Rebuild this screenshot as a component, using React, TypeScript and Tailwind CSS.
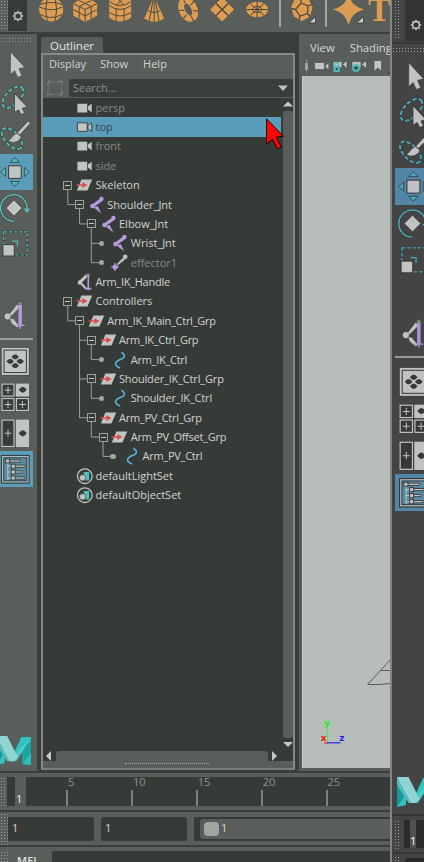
import React from "react";

const UI = "font-['Open_Sans','Noto_Sans',sans-serif]";
const DOTS = "shrink-0 bg-[radial-gradient(#9a9f9b_0.8px,transparent_0.9px)] bg-[length:3px_3px]";

type Tone = { light: string; dark: string; teal: string; purple: string };
const MUTED: Tone = { light: "#c0c5c1", dark: "#393d3a", teal: "#55b8ba", purple: "#b79be0" };
const PLAIN: Tone = { light: "#c2c2c2", dark: "#373737", teal: "#48a9b9", purple: "#a994d8" };

type ToolName = "select" | "lasso" | "paint" | "move" | "rotate" | "scale" | "ik" | "single" | "four" | "two" | "tree";

function Pads({ x, y, fill }: { x: number; y: number; fill: string }) {
  return (
    <g fill={fill} transform={`translate(${x} ${y})`}>
      {[[0, -4.4], [0, 4.4], [-5, 0], [5, 0]].map(([a, b]) => (
        <path key={`${a}${b}`} d={`M${a - 3.8} ${b}l2.6-2.4h2.4l2.6 2.4l-2.6 2.4h-2.4z`} />
      ))}
    </g>
  );
}

function ToolArt({ name, t }: { name: ToolName; t: Tone }) {
  switch (name) {
    case "select":
      return <path d="M13.5 5.7L27.9 21.5L22 22.6L25 29.8L20.6 31.5L17.7 24.8L13.3 28.8z" fill={t.light} stroke={t.dark} strokeWidth=".6" />;
    case "lasso":
      return (
        <>
          <ellipse cx="16" cy="15.3" rx="13.2" ry="7" transform="rotate(-46 16 15.3)" fill="none" stroke={t.dark} strokeWidth="2.8" opacity=".6" />
          <ellipse cx="16" cy="15.3" rx="13.2" ry="7" transform="rotate(-46 16 15.3)" fill="none" stroke={t.teal} strokeWidth="1.8" strokeDasharray="4.2 2" />
          <path d="M17.5 11.5L30.3 25L25.3 26.2L27.7 31.2L24 32.6L21.6 27.8L17.5 30.5z" fill={t.light} stroke={t.dark} strokeWidth=".8" />
        </>
      );
    case "paint":
      return (
        <>
          <ellipse cx="15" cy="20.6" rx="13" ry="6.7" transform="rotate(46 15 20.6)" fill="none" stroke={t.dark} strokeWidth="2.8" opacity=".6" />
          <ellipse cx="15" cy="20.6" rx="13" ry="6.7" transform="rotate(46 15 20.6)" fill="none" stroke={t.teal} strokeWidth="1.8" strokeDasharray="4.2 2" />
          <path d="M31.6 5L21.6 15.8" stroke={t.dark} strokeWidth="4.4" />
          <path d="M32 4.6L21.6 15.8" stroke={t.light} strokeWidth="3" />
          <path d="M11 22.6C14.5 21.5 15 17 19.8 15.2L24 18.6C23 24 15.5 26.3 11 22.6z" fill={t.light} stroke={t.dark} strokeWidth=".6" />
        </>
      );
    case "move":
      return (
        <>
          <rect x="11.6" y="11.8" width="12.6" height="12.6" fill={t.light} stroke={t.dark} strokeWidth="1" />
          <path d="M17.9 3.6l4.6 4.8h-9.2zM17.9 32.3l4.6-4.8h-9.2zM3.6 18l4.9-4.6v9.2zM32.3 18l-4.9-4.6v9.2z" fill={t.teal} stroke={t.dark} strokeWidth=".8" />
        </>
      );
    case "rotate":
      return (
        <>
          <path d="M30 19A13.2 13.2 0 1 0 16.8 31.2" fill="none" stroke={t.dark} strokeWidth="2.8" opacity=".6" />
          <path d="M30 19A13.2 13.2 0 1 0 16.8 31.2" fill="none" stroke={t.teal} strokeWidth="1.5" />
          <path d="M26.6 18.5h6.6l-3.3 4.8z" fill={t.teal} />
          <path d="M17 10l8 8l-8 8l-8-8z" fill={t.light} stroke={t.dark} strokeWidth=".6" />
        </>
      );
    case "scale":
      return (
        <>
          <rect x="6.8" y="5.8" width="23.4" height="23.2" fill="none" stroke={t.dark} strokeWidth="2" />
          <rect x="6.8" y="5.8" width="23.4" height="23.2" fill="none" stroke={t.teal} strokeWidth="1.2" strokeDasharray="3.5 1.5" />
          <path d="M15.2 15.2h5.3v5.3" fill="none" stroke={t.teal} strokeWidth="1.2" />
          <rect x="5.9" y="18.6" width="11.4" height="11.4" fill={t.light} stroke={t.dark} strokeWidth="1" />
        </>
      );
    case "ik":
      return (
        <>
          <path d="M12 16.6L20.2 5.8L23.6 8.8L14.4 18z" fill={t.light} stroke={t.dark} strokeWidth=".6" />
          <path d="M12.4 20.4L16.4 20.6L22.4 28L20.4 30L14.4 25.4z" fill={t.light} stroke={t.dark} strokeWidth=".6" />
          <circle cx="10.6" cy="18.6" r="3" fill={t.light} />
          <circle cx="23.2" cy="5.8" r="2.4" fill="#858986" stroke={t.dark} strokeWidth=".6" />
          <path d="M21.5 7h3.4v20h-3.4z" fill={t.purple} />
          <path d="M19 27.3h8.6M23.2 26v5" stroke={t.purple} strokeWidth="1.3" />
        </>
      );
    case "single":
      return (
        <>
          <rect x="4.2" y="4.3" width="28" height="28" fill={t.light} stroke={t.dark} strokeWidth=".7" />
          <rect x="7" y="7.1" width="22.4" height="22.4" fill="none" stroke={t.dark} strokeWidth="1" />
          <Pads x={18.2} y={18.3} fill={t.dark} />
        </>
      );
    case "four":
      return (
        <>
          <rect x="4.2" y="4.3" width="28" height="28" fill={t.dark} />
          {[[4.7, 4.8], [4.7, 19.2], [19.1, 19.2]].map(([x, y]) => (
            <g key={`${x}-${y}`} stroke={t.light} fill="none">
              <rect x={x + .3} y={y + .3} width="12" height="12" strokeWidth="1.2" />
              <path d={`M${x + 2.8} ${y + 6.3}h7M${x + 6.3} ${y + 2.8}v7`} strokeWidth="1" />
            </g>
          ))}
          <rect x="18.7" y="4.5" width="13.4" height="13.1" fill={t.light} />
          <path d="M21.5 10.7l3-2.7h2.4l3 2.7l-3 2.7h-2.4z" fill={t.dark} />
        </>
      );
    case "two":
      return (
        <>
          <rect x="4.2" y="4.3" width="28" height="28" fill={t.dark} />
          <rect x="5" y="5.1" width="12" height="26.4" fill="none" stroke={t.light} strokeWidth="1.2" />
          <path d="M7.5 18.2h7M11 14.7v7" stroke={t.light} />
          <rect x="18.7" y="4.5" width="13.4" height="27.6" fill={t.light} />
          <path d="M21.5 18.3l3-2.9h2.4l3 2.9l-3 2.9h-2.4z" fill={t.dark} />
        </>
      );
    case "tree":
      return (
        <>
          <rect x="4.7" y="4.7" width="27.2" height="27.2" fill="#568aa5" stroke={t.dark} strokeWidth="1.6" />
          <rect x="5.6" y="5.6" width="25.4" height="25.4" fill="none" stroke={t.light} strokeWidth="1" />
          <rect x="6.8" y="6.8" width="23" height="23" fill="none" stroke={t.dark} strokeWidth=".8" />
          <path d="M10.8 10v19M10.8 15.2h6M10.8 21h6M10.8 27h6" stroke={t.light} fill="none" />
          {[[10.6, 10, 12], [16.2, 15.2, 11], [16.2, 21, 8], [16.2, 27, 10]].map(([x, y, w]) => (
            <g key={y}>
              <path d={`M${x} ${y}h${w + 1.4}`} stroke={t.dark} strokeWidth="3" />
              <path d={`M${x} ${y}h${w + .8}`} stroke={t.light} strokeWidth="1.3" />
              <rect x={x - 2} y={y - 2} width="4" height="4" fill={t.light} stroke={t.dark} strokeWidth=".9" />
            </g>
          ))}
        </>
      );
  }
}

const TOOLS: ToolName[] = ["select", "lasso", "paint", "move", "rotate", "scale"];
const LAYOUTS: ToolName[] = ["single", "four", "two", "tree"];

function Logo({ className }: { className: string }) {
  return (
    <svg className={className} viewBox="0 0 36 30" preserveAspectRatio="none">
      <path d="M0 0h9v28l-9 2z" fill="#139a9a" />
      <path d="M0 30l9-13v11z" fill="#37c0bd" />
      <path d="M36 1h-9v28l9 1z" fill="#25b9b4" />
      <path d="M27 14L36 6v24l-9-1z" fill="#1aa5a1" />
      <path d="M27 29L36 18v12z" fill="#2cc0bb" />
      <path d="M26 1h10L20.5 26h-6z" fill="#2cc3bf" />
      <path d="M36 1L28 15L20.5 26L18 20z" fill="#4bcbc6" />
      <path d="M0 0h11.5l11 22l-4 4h-5z" fill="#8fd3d3" />
      <path d="M0 0l13.5 26h-2L0 8z" fill="#5db9bb" />
    </svg>
  );
}

function Gear({ color }: { color: string }) {
  return (
    <svg width="12" height="12" viewBox="-6 -6 12 12">
      <circle r="3.4" fill="none" stroke={color} strokeWidth="1.6" />
      {[0, 45, 90, 135, 180, 225, 270, 315].map((a) => (
        <path key={a} d="M0-3.8v-1.4" stroke={color} strokeWidth="1.5" transform={`rotate(${a})`} />
      ))}
    </svg>
  );
}

const O = "#de9c52";
const K = "#4b4a40";
const shelf: React.ReactNode[] = [
  <g key="s"><circle r="12" fill={O} /><path d="M-11.5-2.5Q0 3 11.5-2.5M-11 5Q0 11 11 5M-4-11Q-7 0-4 11.5M4-11Q7 0 4 11.5M-11-5Q0-9 11-5" fill="none" stroke={K} /></g>,
  <g key="c"><path d="M0-13L12-6V6L0 12.5L-12 6V-6z" fill={O} /><path d="M-12-6L0 0L12-6M0 0V12M-12 0L0 6.4L12 0M-6-3V9M6-3V9M-6-9L6-3M6-9L-6-3" stroke={K} fill="none" /></g>,
  <g key="y"><path d="M-11-10H11V8Q0 16-11 8z" fill={O} /><path d="M-11-4Q0 4 11-4M-11 3Q0 10 11 3M-4-1V12M4-1V12M-11-8Q0 0 11-8M-4-4L4-12M4-4L-4-12" stroke={K} fill="none" /></g>,
  <g key="n"><path d="M0-13L10 9Q0 16-10 9z" fill={O} /><path d="M-6 1Q0 5 6 1M0-13V13M-1-10L-5 12M1-10L5 12" stroke={K} fill="none" /></g>,
  <g key="t" transform="rotate(-25)"><ellipse rx="6.2" ry="9.8" fill="none" stroke={O} strokeWidth="6" /><path d="M-9-3L-4-1M-8 6L-4 4M0 7V13M4 3L9 6M4-3L9-5M0-7V-13" stroke={K} /></g>,
  <g key="d"><path d="M0-12L12 0L0 12L-12 0z" fill={O} /><path d="M-6-6L6 6M6-6L-6 6" stroke={K} strokeWidth="1.4" /></g>,
  <g key="o"><ellipse rx="11" ry="7.8" fill={O} /><ellipse rx="4.5" ry="3" fill="none" stroke={K} /><path d="M-11 0H11M-7-6L7 6M7-6L-7 6M0-8V8" stroke={K} /></g>,
];

function Shelf() {
  return (
    <div className="flex h-[33px] shrink-0 items-start border-b border-[#3c403d] bg-[#595e5a]">
      <div className={`h-[30px] w-[8px] ${DOTS}`} />
      <div className="flex h-[31px] w-[19px] shrink-0 items-center justify-center bg-[#383c39]"><Gear color="#b9bdba" /></div>
      <div className="ml-[7px] flex shrink-0">
        {shelf.map((art, i) => (
          <svg key={i} className="h-[24px] w-[34.3px]" viewBox="-17.15 -9.5 34.3 24">{art}</svg>
        ))}
      </div>
      <div className="ml-[5px] h-[27px] w-[2px] shrink-0 bg-[#a1a5a2]" />
      <svg className="h-[26px] w-[44px] shrink-0" viewBox="-21 -9.5 44 26">
        <path d="M-4-12H6L10.5-2L8 7L0 11.5L-8 7L-11-2L-8-9z" fill={O} />
        <path d="M-1-6.5L6-3.5L5.5 4L-2 6.5L-6.5 0zM6-3.5L9.5-5M5.5 4L8 7M-2 6.5L-3 10M-6.5 0L-11-1M-1-6.5V-12" fill="none" stroke={K} strokeWidth="1.3" />
        <path d="M13.5 7v6.5H7z" fill="#c8ccc9" stroke="#333" strokeWidth=".8" />
      </svg>
      <div className="h-[27px] w-[2px] shrink-0 bg-[#a1a5a2]" />
      <svg className="h-[26px] w-[40px] shrink-0" viewBox="-21.5 -9.5 40 26">
        <path d="M0-13Q3-3 13 0Q3 3 0 13Q-3 3-13 0Q-3-3 0-13z" fill={O} stroke={O} strokeWidth="1.6" />
        <path d="M15 7v6.5H8z" fill="#c8ccc9" stroke="#333" strokeWidth=".8" />
      </svg>
      <span className="-mt-[7px] ml-px shrink-0 font-['Liberation_Serif',serif] text-[34px] leading-[34px] font-bold text-[#de9c52]">T</span>
    </div>
  );
}

type Kind = "camera" | "group" | "joint" | "effector" | "handle" | "curve" | "set";
type Node = { label: string; kind: Kind; level: number; dim?: boolean; selected?: boolean; box?: boolean; dot?: boolean };

const nodes: Node[] = [
  { label: "persp", kind: "camera", level: 0, dim: true },
  { label: "top", kind: "camera", level: 0, selected: true },
  { label: "front", kind: "camera", level: 0, dim: true },
  { label: "side", kind: "camera", level: 0, dim: true },
  { label: "Skeleton", kind: "group", level: 0, box: true },
  { label: "Shoulder_Jnt", kind: "joint", level: 1, box: true },
  { label: "Elbow_Jnt", kind: "joint", level: 2, box: true },
  { label: "Wrist_Jnt", kind: "joint", level: 3, dot: true },
  { label: "effector1", kind: "effector", level: 3, dot: true, dim: true },
  { label: "Arm_IK_Handle", kind: "handle", level: 0 },
  { label: "Controllers", kind: "group", level: 0, box: true },
  { label: "Arm_IK_Main_Ctrl_Grp", kind: "group", level: 1, box: true },
  { label: "Arm_IK_Ctrl_Grp", kind: "group", level: 2, box: true },
  { label: "Arm_IK_Ctrl", kind: "curve", level: 3, dot: true },
  { label: "Shoulder_IK_Ctrl_Grp", kind: "group", level: 2, box: true },
  { label: "Shoulder_IK_Ctrl", kind: "curve", level: 3, dot: true },
  { label: "Arm_PV_Ctrl_Grp", kind: "group", level: 2, box: true },
  { label: "Arm_PV_Offset_Grp", kind: "group", level: 3, box: true },
  { label: "Arm_PV_Ctrl", kind: "curve", level: 4, dot: true },
  { label: "defaultLightSet", kind: "set", level: 0 },
  { label: "defaultObjectSet", kind: "set", level: 0 },
];

function NodeIcon({ kind, selected }: { kind: Kind; selected?: boolean }) {
  const L = "#c0c5c1";
  const P = "#b79be0";
  return (
    <svg className="h-[18px] w-[17px] shrink-0" viewBox="0 0 17 18">
      {kind === "camera" && <path d="M1.4 4.8h9.8v8.6H1.4zM11.9 7.6l3.8-2.8v8.6l-3.8-2.8z" fill={L} stroke={selected ? "#343b3e" : "none"} strokeWidth=".9" />}
      {kind === "group" && (
        <>
          <path d="M5.4 3.6h10.8L11.4 14.6H.8z" fill={L} />
          <path d="M.5 9h7" stroke="#d94c4c" strokeWidth="1.5" />
          <path d="M6.3 5.9l5.2 3.1l-5.2 3.1z" fill="#d94c4c" />
        </>
      )}
      {kind === "joint" && (
        <g fill={P}>
          <circle cx="13.4" cy="3" r="2.2" />
          <path d="M11.2 3.2l2.6 2.4L6.5 10.5L4 8.6z" /><path d="M5.5 11.2l4.2-1.2l3.6 7.4z" /><circle cx="4.5" cy="10" r="2.3" />
        </g>
      )}
      {kind === "effector" && (
        <>
          <circle cx="14.2" cy="2.8" r="2.3" fill={L} /><path d="M12 3.8l2 1.8L6.5 11.5L5.8 10z" fill={L} />
          <circle cx="4" cy="13" r="2.5" fill={P} /><path d="M0 13h8M4 9v8" stroke={P} strokeWidth="1.2" />
        </>
      )}
      {kind === "handle" && (
        <>
          <path d="M3 8l6.6-6.4l2 2L6 9.6zM3.6 10.6h3.2l4 4.6l-1.4 1.4z" fill={L} /><circle cx="3.9" cy="9.5" r="2.2" fill={L} />
          <circle cx="12" cy="2" r="1.8" fill="#858986" /><path d="M12.3 2.6v14.6M9.4 15.6h6" stroke={P} strokeWidth="1.6" />
        </>
      )}
      {kind === "curve" && <path d="M10.4 1.2C14.4 3.6 14.6 6.4 9.8 8.3C3.8 10.8 2 13.6 9 17" fill="none" stroke="#55b2d8" strokeWidth="1.6" />}
      {kind === "set" && (
        <>
          <circle cx="8.8" cy="9.2" r="7.3" fill="none" stroke={L} strokeWidth="1.3" />
          <path d="M7.4 5h5.8v8.4H9.8z" fill="#49c0bd" /><circle cx="6.6" cy="10.8" r="3.2" fill={L} stroke="#373b38" strokeWidth=".6" />
        </>
      )}
    </svg>
  );
}

const INDENTS = ["w-0", "w-[11.75px]", "w-[23.5px]", "w-[35.25px]", "w-[47px]"];

function TreeRow({ n }: { n: Node }) {
  const color = n.selected ? "text-[#38454b]" : n.dim ? "text-[#858985]" : "text-[#cfd3d0]";
  const tracking = n.label.startsWith("Arm_") ? "tracking-[-0.26px]" : n.label.includes("_IK_") ? "tracking-[-0.16px]" : "tracking-normal";
  return (
    <div className={`flex h-[19.375px] shrink-0 items-center ${n.selected ? "bg-[#5a9dbb]" : ""}`}>
      <div className={`shrink-0 ${INDENTS[n.level]}`} />
      <div className="flex w-[33px] shrink-0 items-center pl-[20.3px]">
        {n.box && (
          <svg className="relative z-10 h-[9px] w-[9px]" viewBox="0 0 9 9">
            <rect x=".5" y=".5" width="8" height="8" fill="#373b38" stroke="#9da19e" />
            <path d="M2 4.5h5" stroke="#c5c9c6" />
          </svg>
        )}
        {n.dot && <span className="h-[5.5px] w-[5.5px] rounded-full bg-[#a3a7a4]" />}
      </div>
      <NodeIcon kind={n.kind} selected={n.selected} />
      <span className={`ml-[2.5px] text-[11px] leading-[18px] whitespace-nowrap ${tracking} ${color}`}>{n.label}</span>
    </div>
  );
}

function Connectors() {
  const c = (row: number) => (row + 0.5) * 19.375;
  const x = (level: number) => 24.8 + level * 11.75;
  const line = (level: number, from: number, to: number[]) =>
    `M${x(level)} ${c(from)}V${c(to[to.length - 1])}` + to.map((r) => `M${x(level)} ${c(r)}h10`).join("");
  return (
    <svg className="pointer-events-none absolute top-0 left-0 h-[407px] w-[120px]">
      <path
        d={line(0, 4, [5]) + line(1, 5, [6]) + line(2, 6, [7, 8]) + line(0, 10, [11]) + line(1, 11, [12, 14, 16]) + line(2, 12, [13]) + line(2, 14, [15]) + line(2, 16, [17]) + line(3, 17, [18])}
        stroke="#9da19e" fill="none"
      />
    </svg>
  );
}

function Outliner() {
  return (
    <div className="flex w-[258px] shrink-0 flex-col bg-[#3a3e3b] pt-[3px] pl-[2px]">
      <div className="flex h-[16px] w-[62px] items-center justify-center rounded-t-[2px] bg-[#595e5a] text-[11.5px] text-[#e3e6e3]"><span className="pt-[2px]">Outliner</span></div>
      <div className="mr-[2px] flex h-[717px] flex-col border-2 border-[#858a86] border-b-[#7b807c] bg-[#595e5a]">
        <div className="flex h-[18px] items-center gap-[14px] pl-[6px] text-[11px] text-[#d0d4d1]">
          <span>Display</span><span>Show</span><span className="pl-px">Help</span>
        </div>
        <div className="mt-[6px] flex h-[18px] items-center">
          <svg className="ml-[4px] h-[16px] w-[16px]" viewBox="0 0 16 16">
            <path d="M1 4.5V1.5h4M11 1.5h4v3M15 11.5v3h-4M5 14.5H1v-3" fill="none" stroke="#858a86" strokeWidth="1.7" strokeDasharray="2 1" />
            <path d="M2 6v4M14 6v4M6 2h4M6 14h4" stroke="#858a86" strokeDasharray="1 1.5" />
          </svg>
          <div className="ml-[6px] flex h-[18px] flex-1 items-center justify-between rounded-[2px] bg-[#3a3e3b] pr-[5px] pl-[4px] text-[11px] text-[#8d918e]">
            <span className="pt-px">Search...</span>
            <svg width="10" height="6" viewBox="0 0 10 6"><path d="M0 .5h10L5 6z" fill="#bcc0bd" /></svg>
          </div>
        </div>
        <div className="mt-[1px] flex h-[654px] shrink-0 bg-[#373b38]">
          <div className="flex w-[238px] flex-col">
            <div className="relative flex flex-col">
              {nodes.map((n) => <TreeRow key={n.label} n={n} />)}
              <Connectors />
            </div>
          </div>
          <div className="ml-[2px] flex w-[10px] flex-col items-center pt-[3px]">
            <svg width="10" height="6" viewBox="0 0 10 6"><path d="M0 5.5h10L5 .5z" fill="#c5c9c6" /></svg>
            <div className="mt-[4px] h-[627px] w-[10px] rounded-[3px] bg-[#595e5a]" />
            <svg className="mt-[4px]" width="10" height="6" viewBox="0 0 10 6"><path d="M0 0h10L5 5z" fill="#c5c9c6" /></svg>
          </div>
        </div>
        <div className="-mt-px flex h-[10px] shrink-0 items-center bg-[#373b38] pl-[3px]">
          <svg width="5" height="10" viewBox="0 0 5 10"><path d="M5 0v10L0 5z" fill="#c5c9c6" /></svg>
          <div className="ml-[5px] h-[10px] w-[212px] rounded-t-[3px] bg-[#595e5a]" />
          <svg className="ml-[4px]" width="5" height="10" viewBox="0 0 5 10"><path d="M0 0v10l5-5z" fill="#c5c9c6" /></svg>
        </div>
        <div className="mt-[2px] ml-[82px] w-[84px] border-t border-dotted border-[#a0a4a1]" />
      </div>
    </div>
  );
}

function Viewport() {
  return (
    <div className="flex w-[93px] shrink-0 flex-col overflow-hidden border-l-2 border-[#3a3e3b] bg-[#595e5a]">
      <div className="flex h-[24px] items-end gap-[15px] pb-[3px] pl-[11px] text-[11.3px] leading-[15px] text-[#d5d9d6]">
        <span>View</span><span>Shading</span>
      </div>
      <svg className="mt-[1px] h-[16px] w-[91px]" viewBox="299 59 91 16">
        <path d="M306.5 59.5v14" stroke="#858a86" /><rect x="305" y="63" width="3" height="7" fill="#a1a5a2" />
        <g fill="#c0c5c1" stroke="#404441" strokeWidth=".6">
          <path d="M314.5 62.5h10v7h-10zM324.8 66l4-3.5v8z" />
          <path d="M333 61.5h9v6h-9zM342.5 64.5l4.5-4v8z" />
          <path d="M352 61.5h9v6h-9zM361.5 64.5l5-4v8z" />
          <path d="M374 60.5h7.5v11l-3.7-3.5l-3.8 3.5z" />
        </g>
        <rect x="333.5" y="66" width="6.5" height="6" fill="#4eb7b9" /><path d="M335 66v-3h3.6v3" fill="none" stroke="#4eb7b9" strokeWidth="1.3" /><circle cx="336.8" cy="69" r="1" fill="#333" />
        <circle cx="356" cy="68" r="3.6" fill="#4eb7b9" stroke="#4eb7b9" strokeWidth="1.6" strokeDasharray="1.6 1.3" /><circle cx="356" cy="68" r="1.8" fill="#404441" />
        <path d="M388 73h3" stroke="#333" />
      </svg>
      <svg className="mt-[1px] ml-[3px] h-[692px] w-[88px] bg-[#b7bdb9]" viewBox="302 76 88 692">
        <path d="M302.5 76v692" stroke="#c8cdc9" />
        <path d="M390 660L381 670L367.5 684.5L380 684.5L390 683.5M381 670.5h9" fill="none" stroke="#5b5f5c" />
        <path d="M327.5 742V730" stroke="#2cff2c" /><path d="M324 743h4" stroke="#f22" strokeWidth="1.2" /><path d="M327 742.8h13.5" stroke="#2b2be8" strokeWidth="1.3" />
        <g className="font-['DejaVu_Sans',sans-serif] text-[9px] font-bold">
          <text x="324" y="725.5" fill="#18f018">y</text><text x="320.8" y="741" fill="#f01818">x</text><text x="339.2" y="741" fill="#2020e0">z</text>
        </g>
      </svg>
    </div>
  );
}

function Timeline() {
  return (
    <div className="flex h-[39px] shrink-0 items-start border-t-2 border-[#3a3e3b] bg-[#595e5a] pt-[4px]">
      <div className={`h-[29px] w-[7px] ${DOTS}`} />
      <div className="h-[29px] w-[8px] shrink-0 bg-[#373b38]" />
      <div className="flex h-[29px] w-[11px] shrink-0 items-end pl-[1px] text-[11px] leading-[15px] text-[#f0f2f0]">1</div>
      <div className="flex h-[29px] flex-1 bg-[#373b38] pl-[41px]">
        {["5", "10", "15", "20", "25"].map((v) => (
          <div key={v} className="-mt-[3px] flex w-[64.9px] shrink-0 flex-col">
            <span className="pl-[1px] text-[11px] leading-[16px] text-[#8d928e]">{v}</span>
            <span className="-ml-px h-[16px] w-[2px] bg-[#7c817d]" />
          </div>
        ))}
      </div>
    </div>
  );
}

function RangeBar() {
  return (
    <div className="flex h-[35px] shrink-0 items-center border-t-2 border-[#3a3e3b] bg-[#595e5a] text-[11px] text-[#d8dcd9]">
      <div className={`h-[32px] w-[8px] ${DOTS}`} />
      <div className="flex h-[24px] w-[86px] items-center rounded-[2px] bg-[#373b38] pl-[4px]">1</div>
      <div className="ml-[7px] flex h-[24px] w-[86px] items-center rounded-[2px] bg-[#373b38] pl-[4px]">1</div>
      <div className="ml-[7px] flex h-[24px] flex-1 items-center bg-[#373b38] pl-[6px]">
        <div className="flex h-[20px] flex-1 items-center rounded-l-[3px] bg-[#595e5a] pl-[4px]">
          <span className="h-[14px] w-[15px] rounded-[4px] bg-[#a3a7a4]" />
          <span className="ml-[2px]">1</span>
        </div>
      </div>
    </div>
  );
}

function SecondWindow() {
  return (
    <div className="flex w-[34px] shrink-0 flex-col overflow-hidden border-l-2 border-[#858585] bg-[#444444]">
      <div className="flex h-[44px] shrink-0 border-b-2 border-[#363636] pl-[2px]">
        <div className={`h-[40px] w-[6px] ${DOTS}`} />
        <div className="ml-[5px] flex h-[41px] w-[22px] shrink-0 items-center justify-center bg-[#343434] pt-[9px]"><Gear color="#c2c2c2" /></div>
      </div>
      <div className={`mt-[3px] h-[6px] ${DOTS}`} />
      <div className="mt-[4px] ml-[3px] flex w-[37px] shrink-0 flex-col">
        {TOOLS.map((n) => (
          <div key={n} className={`h-[37px] ${n === "move" ? "bg-[#5285a6]" : ""}`}>
            <svg className="h-[37px] w-[37px]" viewBox="0 0 36 36"><ToolArt name={n} t={PLAIN} /></svg>
          </div>
        ))}
        <svg className="mt-[37px] h-[37px] w-[37px]" viewBox="0 0 36 36"><ToolArt name="ik" t={PLAIN} /></svg>
        <div className="mt-[3px] mb-[5px] h-[2px] bg-[#9a9a9a]" />
        {LAYOUTS.map((n) => (
          <div key={n} className={`h-[37px] ${n === "tree" ? "bg-[#5285a6]" : ""}`}>
            <svg className="h-[37px] w-[37px]" viewBox="0 0 36 36"><ToolArt name={n} t={PLAIN} /></svg>
          </div>
        ))}
      </div>
      <Logo className="mt-[266px] ml-[5px] h-[30px] w-[36px] shrink-0" />
      <div className="mt-[7px] flex h-[38px] shrink-0 border-t-2 border-[#363636] pt-[4px] pl-[2px]">
        <div className={`h-[29px] w-[6px] ${DOTS}`} />
        <div className="ml-[4px] flex h-[28px] w-[24px] shrink-0 bg-[#2b2b2b] pl-[6px]">
          <span className="flex w-[6px] items-end bg-[#525252] text-[11px] leading-[15px] text-white">1</span>
        </div>
      </div>
      <div className="flex h-[10px] shrink-0 border-t-2 border-[#363636] pt-[2px] pl-[2px]">
        <div className={`h-[8px] w-[6px] ${DOTS}`} />
        <div className="mt-[2px] ml-[5px] h-[6px] w-[24px] shrink-0 rounded-tl-[2px] bg-[#2b2b2b]" />
      </div>
    </div>
  );
}

export default function App() {
  return (
    <div className={`relative flex h-[862px] w-[424px] overflow-hidden bg-[#595e5a] ${UI}`}>
      <div className="flex w-[390px] shrink-0 flex-col overflow-hidden">
        <Shelf />
        <div className="flex h-[738px] shrink-0 border-t border-[#3a3e3b]">
          <div className="flex w-[39px] shrink-0 flex-col border-r-2 border-[#3a3e3b] bg-[#595e5a]">
            <div className={`mt-[3px] ml-[2px] h-[6px] w-[30px] ${DOTS}`} />
            <div className="mt-[3px] -ml-[3px] flex w-[36px] flex-col">
              {TOOLS.map((n) => (
                <div key={n} className={`h-[36px] ${n === "move" ? "bg-[#5a9dbb]" : ""}`}>
                  <svg className="h-[36px] w-[36px]" viewBox="0 0 36 36"><ToolArt name={n} t={MUTED} /></svg>
                </div>
              ))}
              <svg className="mt-[36px] h-[36px] w-[36px]" viewBox="0 0 36 36"><ToolArt name="ik" t={MUTED} /></svg>
              <div className="mt-[4px] mb-[3px] h-[2px] bg-[#9a9e9b]" />
              {LAYOUTS.map((n) => (
                <div key={n} className={`h-[36px] ${n === "tree" ? "bg-[#5a9dbb]" : ""}`}>
                  <svg className="h-[36px] w-[36px]" viewBox="0 0 36 36"><ToolArt name={n} t={MUTED} /></svg>
                </div>
              ))}
            </div>
            <Logo className="mt-[249px] -ml-[4px] h-[29px] w-[35px] shrink-0" />
          </div>
          <Outliner />
          <Viewport />
        </div>
        <Timeline />
        <RangeBar />
        <div className="flex h-[17px] shrink-0 border-t-2 border-[#3a3e3b] bg-[#595e5a] pt-[4px]">
          <div className={`h-[12px] w-[8px] ${DOTS}`} />
          <span className="w-[44px] pt-[2px] pl-[9px] text-[11px] leading-[16px] font-semibold text-[#dfe2df]">MEL</span>
          <div className="h-[20px] flex-1 rounded-tl-[2px] bg-[#373b38]" />
        </div>
      </div>
      <SecondWindow />
      <svg className="absolute top-[116px] left-[264px] h-[36px] w-[22px]" viewBox="264 116 22 36">
        <path d="M266.5 118.8L283.3 136.2L276.3 137L281.2 147.2L277.4 149L272.4 139.2L266.5 144.5z" fill="#fb0505" stroke="#200" strokeWidth="1" />
      </svg>
    </div>
  );
}
